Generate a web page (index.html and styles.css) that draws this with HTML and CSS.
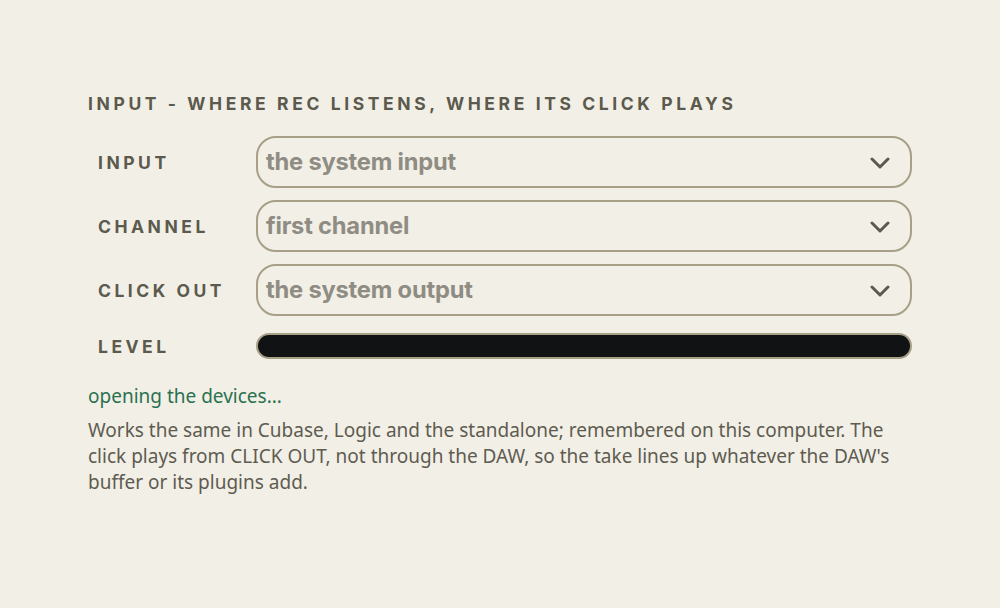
FILE: index.html
```html
<!DOCTYPE html>
<html>
<head>
<meta charset="utf-8">
<link rel="stylesheet" href="styles.css">
</head>
<body>
<main class="panel">
  <h2 class="title">INPUT - WHERE REC LISTENS, WHERE ITS CLICK PLAYS</h2>
  <div class="rows">
    <div class="row">
      <span class="label">INPUT</span>
      <div class="select"><span class="value">the system input</span>
        <svg class="chev" viewBox="0 0 20 12" width="20" height="12"><path d="M2 2 L10 10 L18 2" fill="none" stroke="#5b5a4c" stroke-width="3" stroke-linecap="round" stroke-linejoin="round"/></svg>
      </div>
    </div>
    <div class="row">
      <span class="label">CHANNEL</span>
      <div class="select"><span class="value">first channel</span>
        <svg class="chev" viewBox="0 0 20 12" width="20" height="12"><path d="M2 2 L10 10 L18 2" fill="none" stroke="#5b5a4c" stroke-width="3" stroke-linecap="round" stroke-linejoin="round"/></svg>
      </div>
    </div>
    <div class="row">
      <span class="label">CLICK OUT</span>
      <div class="select"><span class="value">the system output</span>
        <svg class="chev" viewBox="0 0 20 12" width="20" height="12"><path d="M2 2 L10 10 L18 2" fill="none" stroke="#5b5a4c" stroke-width="3" stroke-linecap="round" stroke-linejoin="round"/></svg>
      </div>
    </div>
    <div class="row level-row">
      <span class="label">LEVEL</span>
      <div class="meter"></div>
    </div>
  </div>
  <p class="status">opening the devices...</p>
  <p class="note">Works the same in Cubase, Logic and the standalone; remembered on this computer. The click plays from CLICK OUT, not through the DAW, so the take lines up whatever the DAW's buffer or its plugins add.</p>
</main>
</body>
</html>
```
FILE: styles.css
```css
html, body {
  margin: 0;
  padding: 0;
  background: #f2efe7;
}
body {
  font-family: "Noto Sans", "Open Sans", sans-serif;
  color: #5e5c50;
}
.panel {
  width: 824px;
  margin: 0 0 0 88px;
  padding-top: 93px;
}
.title {
  margin: 0;
  font-family: Inter, "Noto Sans", sans-serif;
  font-size: 17.5px;
  line-height: 22px;
  font-weight: 700;
  letter-spacing: 3.6px;
  color: #5b5a4c;
}
.rows {
  margin-top: 21px;
  display: flex;
  flex-direction: column;
  gap: 12px;
}
.row {
  display: grid;
  grid-template-columns: 168px 1fr;
  align-items: center;
}
.label {
  padding-left: 10px;
  font-family: Inter, "Noto Sans", sans-serif;
  font-size: 17.5px;
  font-weight: 700;
  letter-spacing: 3.5px;
  color: #5b5a4c;
}
.select {
  height: 52px;
  box-sizing: border-box;
  border: 2px solid #a79f86;
  border-radius: 20px;
  display: flex;
  align-items: center;
  justify-content: space-between;
  padding: 0 20px 0 8px;
}
.value {
  font-family: Inter, Roboto, sans-serif;
  font-size: 23.7px;
  font-weight: 700;
  color: #8f8c83;
  letter-spacing: -0.2px;
  margin-top: -1px;
}
.chev {
  display: block;
  margin-top: 2px;
}
.level-row {
  margin-top: 5px;
}
.meter {
  height: 26px;
  box-sizing: border-box;
  border: 2px solid #a79f86;
  border-radius: 13px;
  background: #111214;
}
.status {
  margin: 24px 0 0 0;
  font-size: 19px;
  line-height: 26px;
  color: #2a7150;
}
.note {
  margin: 8px 0 0 0;
  font-size: 19px;
  line-height: 26px;
  color: #5e5c50;
}
```
